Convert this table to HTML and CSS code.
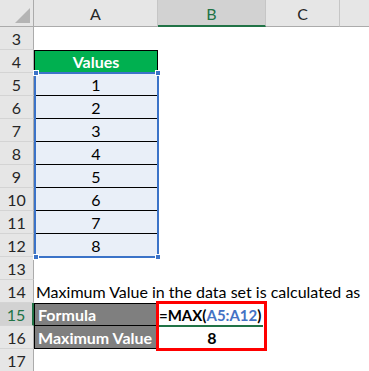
FILE: index.html
```html
<!DOCTYPE html>
<html>
<head>
<meta charset="utf-8">
<link rel="stylesheet" href="styles.css">
</head>
<body>
<div class="sheet">
  <div class="corner"><span class="tri"></span></div>
  <div class="ch">A</div>
  <div class="ch sel">B</div>
  <div class="ch">C</div>
  <div class="ch last"></div>

  <div class="rh">3</div><div class="c"></div><div class="c"></div><div class="c"></div><div class="c"></div>

  <div class="rh">4</div><div class="c head">Values</div><div class="c"></div><div class="c"></div><div class="c"></div>

  <div class="rh">5</div><div class="c val">1</div><div class="c"></div><div class="c"></div><div class="c"></div>
  <div class="rh">6</div><div class="c val">2</div><div class="c"></div><div class="c"></div><div class="c"></div>
  <div class="rh">7</div><div class="c val">3</div><div class="c"></div><div class="c"></div><div class="c"></div>
  <div class="rh">8</div><div class="c val">4</div><div class="c"></div><div class="c"></div><div class="c"></div>
  <div class="rh">9</div><div class="c val">5</div><div class="c"></div><div class="c"></div><div class="c"></div>
  <div class="rh">10</div><div class="c val">6</div><div class="c"></div><div class="c"></div><div class="c"></div>
  <div class="rh">11</div><div class="c val">7</div><div class="c"></div><div class="c"></div><div class="c"></div>
  <div class="rh">12</div><div class="c val">8</div><div class="c"></div><div class="c"></div><div class="c"></div>

  <div class="rh">13</div><div class="c"></div><div class="c"></div><div class="c"></div><div class="c"></div>

  <div class="rh">14</div><div class="c span">Maximum Value in the data set is calculated as</div>

  <div class="rh sel">15</div><div class="c label">Formula</div><div class="c formula">=MAX(<span class="ref">A5:A12</span>)</div><div class="c"></div><div class="c"></div>

  <div class="rh">16</div><div class="c label">Maximum Value</div><div class="c result">8</div><div class="c"></div><div class="c"></div>

  <div class="rh">17</div><div class="c"></div><div class="c"></div><div class="c"></div><div class="c"></div>

  <!-- range highlight around the values, with its corner handles -->
  <div class="range">
    <span class="hd tl"></span><span class="hd tr"></span>
    <span class="hd bl"></span><span class="hd br"></span>
  </div>

  <!-- active cell underline and fill handle -->
  <div class="active"><span class="fill"></span></div>

  <!-- red callout box around the formula and its result -->
  <div class="callout"></div>
</div>
</body>
</html>
```

FILE: styles.css
```css
* { box-sizing: border-box; }

body {
  margin: 0;
  background: #ffffff;
  font-family: Lato, "Liberation Sans", sans-serif;
  color: #000;
}

.sheet {
  position: relative;
  display: grid;
  grid-template-columns: 34px 124px 108px 74px 29px;
  grid-template-rows: 27px repeat(15, 23px);
  width: 369px;
  height: 371px;
  overflow: hidden;
}

/* header strip */
.corner {
  background: #e6e6e6;
  border-right: 1px solid #ababab;
  border-bottom: 1px solid #ababab;
  display: flex;
  align-items: flex-end;
  justify-content: flex-end;
  padding: 0 3px 3px 0;
}
.tri {
  width: 0;
  height: 0;
  border-left: 15px solid transparent;
  border-bottom: 15px solid #b4b4b4;
}
.ch {
  background: #e6e6e6;
  border-right: 1px solid #c6c6c6;
  border-bottom: 1px solid #ababab;
  display: flex;
  align-items: center;
  justify-content: center;
  font-size: 16px;
  color: #262626;
  padding-top: 1px;
}
.ch.sel {
  background: #d2d2d2;
  color: #217346;
  border-bottom: 2px solid #217346;
}
.ch.last { border-right: none; }

/* row numbers */
.rh {
  background: #e6e6e6;
  border-right: 1px solid #ababab;
  border-bottom: 1px solid #d4d4d4;
  display: flex;
  align-items: center;
  justify-content: center;
  font-size: 16px;
  color: #262626;
}
.rh.sel {
  background: #d2d2d2;
  color: #217346;
  border-right: 2px solid #217346;
}

/* cells */
.c {
  display: flex;
  align-items: center;
  padding: 0 3px;
  font-size: 16px;
  white-space: nowrap;
}
.head {
  background: #00b050;
  color: #fff;
  font-weight: 700;
  justify-content: center;
  border: 1px solid #000;
}
.val {
  background: #e9eff8;
  justify-content: center;
  border-right: 1px solid #000;
  border-bottom: 1px solid #000;
  border-left: 1px solid #000;
}
.span {
  grid-column: 2 / 6;
  padding-left: 2px;
}
.label {
  background: #7f7f7f;
  color: #fff;
  font-weight: 700;
  border: 1px solid #000;
  border-top: none;
}
.rh.sel + .label { border-top: 1px solid #000; }
.formula {
  font-weight: 700;
  font-size: 15px;
  padding-left: 1px;
}
.ref { color: #4472c4; }
.result {
  font-weight: 700;
  justify-content: center;
}

/* overlays */
.range {
  position: absolute;
  left: 34px;
  top: 72px;
  width: 125px;
  height: 186px;
  border: 2px solid #3b73c8;
}
.hd {
  position: absolute;
  width: 6px;
  height: 6px;
  background: #3b73c8;
  border: 1px solid #fff;
}
.tl { left: -3px; top: -4px; }
.tr { right: -4px; top: -4px; }
.bl { left: -3px; bottom: -4px; }
.br { right: -4px; bottom: -4px; }

.active {
  position: absolute;
  left: 158px;
  top: 325px;
  width: 106px;
  height: 2px;
  background: #217346;
}
.fill {
  position: absolute;
  right: -4px;
  top: -2px;
  width: 5px;
  height: 5px;
  background: #217346;
  border: 1px solid #fff;
}

.callout {
  position: absolute;
  left: 156px;
  top: 301px;
  width: 111px;
  height: 50px;
  border: 3px solid #ff0000;
}
```
